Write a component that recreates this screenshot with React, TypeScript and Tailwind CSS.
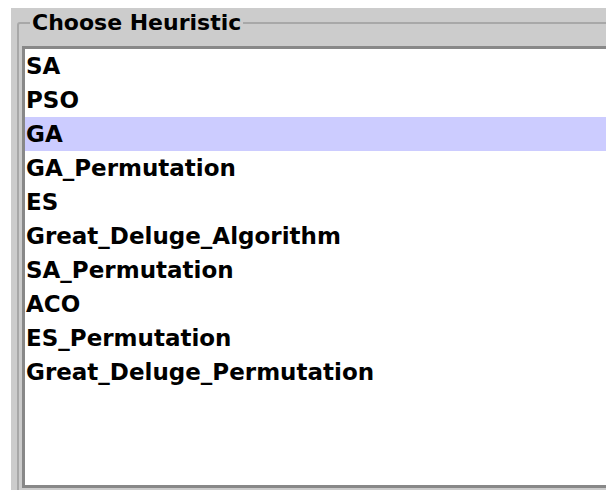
const heuristics = [
  'SA',
  'PSO',
  'GA',
  'GA_Permutation',
  'ES',
  'Great_Deluge_Algorithm',
  'SA_Permutation',
  'ACO',
  'ES_Permutation',
  'Great_Deluge_Permutation',
];

const selected = 'GA';

export default function App() {
  return (
    <div className="w-[606px] h-[490px] overflow-hidden bg-white pt-[8px] pl-[11px] font-['DejaVu_Sans',sans-serif] font-bold text-black">
      <div className="w-[620px] h-[500px] bg-[#cccccc] pl-[6px]">
        {/* titled border around the list */}
        <fieldset className="h-[520px] border-2 border-[#a8a8a8] rounded-tl-[3px] pl-[3px]">
          <legend className="ml-[8px] px-[2px] text-[22px] leading-[30px]">Choose Heuristic</legend>
          <ul className="mt-[8px] h-[442px] bg-white border-t-[3px] border-l-[3px] border-b-[3px] border-[#888888]">
            {heuristics.map((name) => (
              <li
                key={name}
                className={`h-[34px] pl-[1px] text-[23px] leading-[34px] ${name === selected ? 'bg-[#ccccff]' : ''}`}
              >
                {name}
              </li>
            ))}
          </ul>
        </fieldset>
      </div>
    </div>
  );
}
